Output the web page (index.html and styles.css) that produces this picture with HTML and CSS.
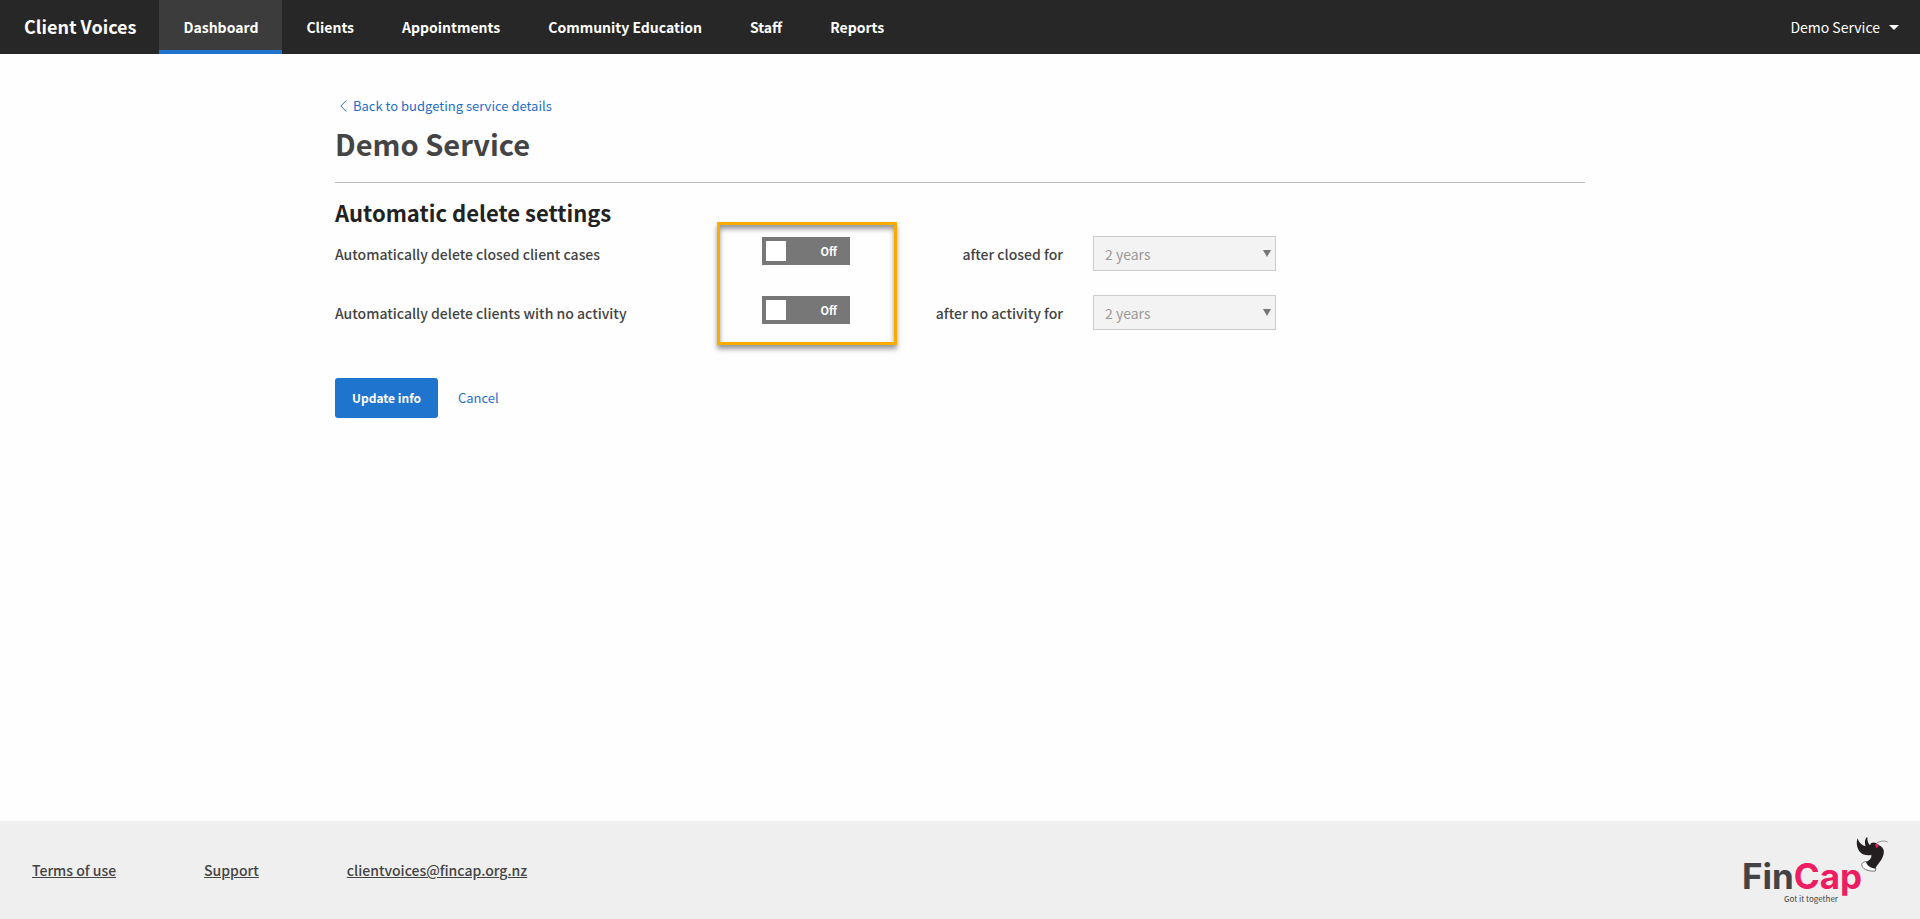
FILE: index.html
```html
<!DOCTYPE html>
<html lang="en">
<head>
    <meta charset="utf-8">
    <title>Client Voices - Demo Service</title>
    <meta name="viewport" content="width=device-width, initial-scale=1">
    <link rel="stylesheet" href="styles.css">
</head>
<body>

<header class="header">
    <a href="#" class="brand">Client Voices</a>
    <nav class="nav">
        <a href="#" class="nav-link active">Dashboard</a>
        <a href="#" class="nav-link">Clients</a>
        <a href="#" class="nav-link">Appointments</a>
        <a href="#" class="nav-link">Community Education</a>
        <a href="#" class="nav-link">Staff</a>
        <a href="#" class="nav-link">Reports</a>
    </nav>
    <button type="button" class="user-menu">Demo Service <span class="caret"></span></button>
</header>

<main class="container">
    <a href="#" class="back-link">
        <svg width="7" height="12" viewBox="0 0 7 12" aria-hidden="true"><path d="M6.3.5.8 6l5.5 5.5" fill="none" stroke="currentColor"/></svg>
        Back to budgeting service details
    </a>
    <h1>Demo Service</h1>

    <form>
        <h2>Automatic delete settings</h2>
        <div class="settings">
            <div class="row">
                <label for="delete-closed">Automatically delete closed client cases</label>
                <label class="toggle"><input type="checkbox" id="delete-closed"><span>Off</span></label>
                <label for="closed-for" class="period">after closed for</label>
                <div class="select">
                    <select id="closed-for" disabled>
                        <option>2 years</option>
                    </select>
                </div>
            </div>
            <div class="row">
                <label for="delete-inactive">Automatically delete clients with no activity</label>
                <label class="toggle"><input type="checkbox" id="delete-inactive"><span>Off</span></label>
                <label for="inactive-for" class="period">after no activity for</label>
                <div class="select">
                    <select id="inactive-for" disabled>
                        <option>2 years</option>
                    </select>
                </div>
            </div>
            <div class="highlight"></div>
        </div>
        <div class="actions">
            <button type="submit" class="btn">Update info</button>
            <a href="#" class="cancel">Cancel</a>
        </div>
    </form>
</main>

<footer class="footer">
    <nav class="footer-links">
        <a href="#">Terms of use</a>
        <a href="#">Support</a>
        <a href="#">clientvoices@fincap.org.nz</a>
    </nav>
    <svg class="logo" width="150" height="74" viewBox="0 0 150 74" role="img" aria-label="FinCap, Got it together">
        <text class="logo-name" x="2" y="56">Fin<tspan class="logo-cap">Cap</tspan></text>
        <text class="logo-tag" x="44" y="69">Got it together</text>
        <!-- bird -->
        <svg x="110" y="-3" width="40" height="50" viewBox="0 0 120 150">
            <path fill="#fff" stroke="#333" stroke-width="2" d="M50 95c-10 0-17 5-14 13 4 11 22 17 40 15l2-8z"/>
            <path fill="#231f20" d="M23 25c-5 12-3 28 6 40 8 9 20 12 35 10 1 10-6 17-16 21 3 10 12 18 28 20 4-11 12-17 18-27 8-13 11-28 2-37-4-4-9-6-13-9-5-6-14-8-20-3l-3 6c-6-5-8-14-8-25-7 4-9 15-5 28-12-3-21-12-24-24z"/>
            <path fill="#ee1d62" d="M77 42c5-2 9 0 8 5l-4 8c-4-3-6-9-4-13z"/>
            <path fill="none" stroke="#666" stroke-width="2" d="M80 39c10-6 22-8 33-3"/>
        </svg>
    </svg>
</footer>

</body>
</html>
```
FILE: styles.css
```css
* {
    box-sizing: border-box;
}
body {
    margin: 0;
    min-height: 100vh;
    display: flex;
    flex-direction: column;
    background-color: #fefefe;
    color: #444;
    font-family: "Noto Sans CJK SC", "Noto Sans", sans-serif;
    font-size: 14px;
    line-height: 20px;
}
button, select, input {
    font: inherit;
    margin: 0;
}
a {
    color: #1f6fc9;
    text-decoration: none;
}

/* header */
.header {
    display: flex;
    height: 54px;
    background-color: #272727;
}
.brand {
    padding: 16px 23px 16px 24px;
    color: #fff;
    font-size: 18px;
    font-weight: bold;
}
.nav {
    display: flex;
    flex: 1;
}
.nav-link {
    padding: 17px 24px 13px;
    border-bottom: 4px solid transparent;
    color: #fff;
    font-weight: bold;
}
.nav-link.active {
    background-color: #3c3c3c;
    border-bottom-color: #1f74cd;
}
.user-menu {
    display: flex;
    align-items: center;
    gap: 9px;
    padding: 0 21px;
    border: 0;
    background: none;
    color: #fff;
}
.caret {
    border: 5px solid transparent;
    border-top-color: #fff;
    border-bottom: 0;
}

/* content */
.container {
    flex: 1;
    width: 100%;
    max-width: 1250px;
    margin: 0 auto;
    padding-top: 42px;
}
.back-link {
    display: inline-flex;
    align-items: center;
    gap: 6px;
    padding-left: 5px;
    font-size: 13px;
}
h1 {
    margin: 7px 0 14px;
    padding-bottom: 19px;
    border-bottom: 1px solid #bbb;
    font-size: 29px;
    line-height: 40px;
}
h2 {
    margin: 0 0 9px;
    color: #222;
    font-size: 22px;
    line-height: 30px;
}
.settings {
    position: relative;
}
.row {
    display: grid;
    grid-template-columns: 427px 88px 213px 183px;
    align-items: center;
    height: 35px;
    margin-bottom: 24px;
    font-weight: 500;
}
.toggle {
    display: flex;
    align-self: start;
    align-items: center;
    justify-content: space-between;
    height: 28px;
    margin-top: 1px;
    padding: 0 13px 0 4px;
    background-color: #777;
    color: #fff;
    font-size: 11px;
    font-weight: bold;
}
.toggle input {
    appearance: none;
    width: 20px;
    height: 20px;
    background-color: #fff;
}
.period {
    text-align: right;
}
.select {
    position: relative;
    margin-left: 30px;
    width: 183px;
    font-weight: normal;
}
.select::after {
    content: "";
    position: absolute;
    right: 5px;
    top: 14px;
    border: 4px solid transparent;
    border-top: 7px solid #777;
    border-bottom: 0;
}
.select select {
    appearance: none;
    display: block;
    width: 100%;
    height: 35px;
    padding: 0 11px;
    border: 1px solid #ccc;
    border-radius: 0;
    background-color: #f3f3f3;
    color: #999;
    opacity: 1;
}
.highlight {
    position: absolute;
    left: 382px;
    top: -14px;
    width: 180px;
    height: 123px;
    border: 3px solid #fbab00;
    box-shadow: 0 4px 5px rgba(0,0,0,0.4), inset 0 4px 5px rgba(0,0,0,0.4);
    pointer-events: none;
}
.actions {
    display: flex;
    align-items: center;
    gap: 20px;
    padding-top: 24px;
}
.btn {
    height: 40px;
    padding: 0 17px;
    border: 0;
    border-radius: 3px;
    background-color: #1f74cd;
    color: #fff;
    font-size: 12px;
    font-weight: bold;
}
.cancel {
    font-size: 13px;
}

/* footer */
.footer {
    display: flex;
    align-items: center;
    justify-content: space-between;
    height: 98px;
    padding: 0 30px 0 32px;
    background-color: #efefef;
}
.footer-links {
    display: flex;
    gap: 88px;
}
.footer-links a {
    color: #444;
    font-weight: 500;
    text-decoration: underline;
}
.logo-name {
    fill: #434345;
    font-family: Inter, sans-serif;
    font-size: 35px;
    font-weight: bold;
}
.logo-cap {
    fill: #ee1d62;
}
.logo-tag {
    fill: #444;
    font-size: 8px;
}
```
